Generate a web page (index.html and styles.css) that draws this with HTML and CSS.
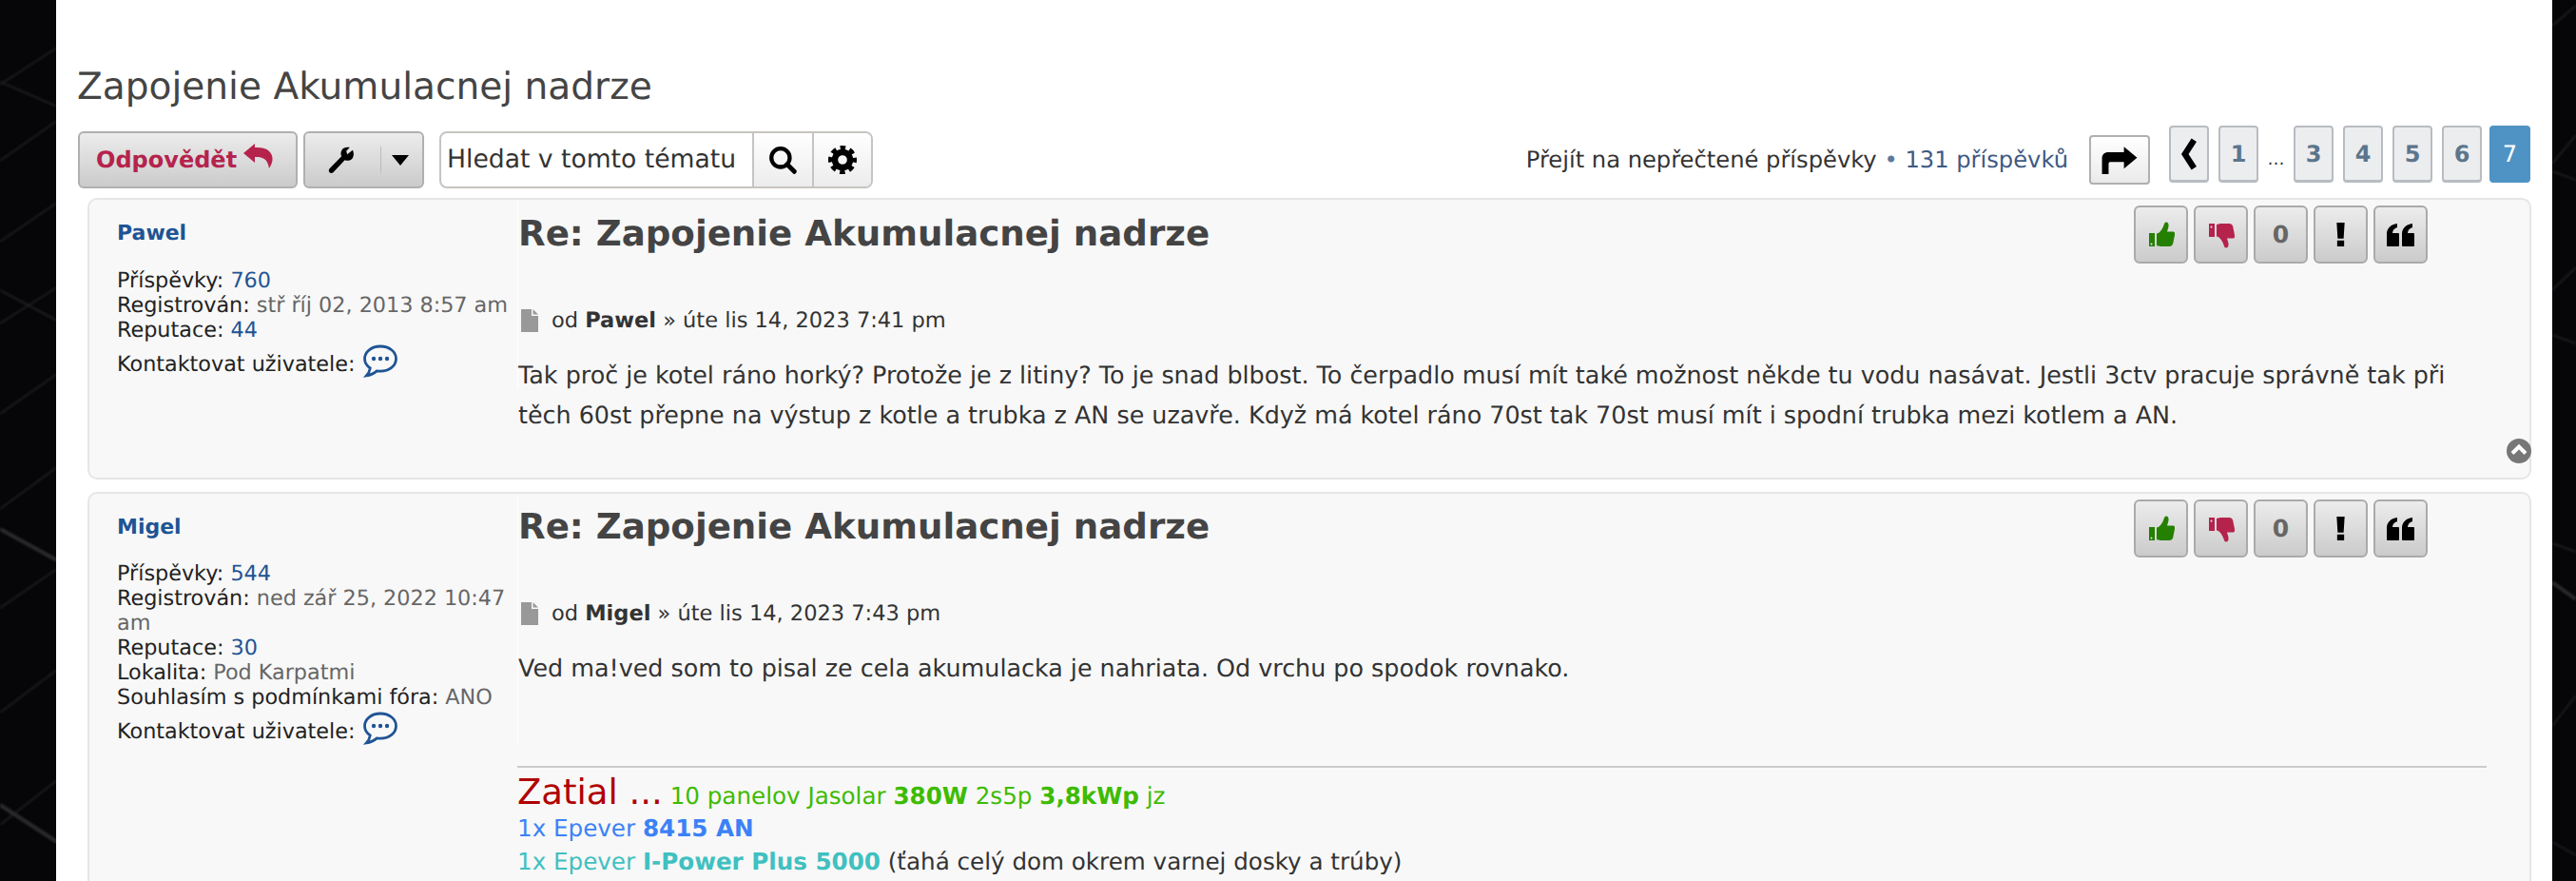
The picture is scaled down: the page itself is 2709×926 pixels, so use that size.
FILE: index.html
```html
<!DOCTYPE html>
<html lang="cs">
<head>
<meta charset="utf-8">
<title>Zapojenie Akumulacnej nadrze</title>
<link rel="stylesheet" href="styles.css">
</head>
<body>
<svg class="bg-lines" viewBox="0 0 2709 926" aria-hidden="true">
  <path class="line" d="M0 89 60 50M0 169 60 127M0 254 60 213M0 340 60 302M0 435 60 393M0 535 60 491M0 639 60 598M0 749 60 704M0 867 60 820M0 86 60 112M0 305 60 337"/>
  <path class="line" d="M2684 305 2709 281M2684 172 2709 142M2684 27 2709 6M2684 763 2709 731M2684 180 2709 189M2684 352 2709 361M2684 571 2709 580M2684 885 2709 899"/>
  <path class="line line-bright" d="M0 556 60 589M0 846 60 885M2684 612 2709 630"/>
</svg>
<svg class="icon-defs" width="0" height="0" aria-hidden="true">
  <defs>
    <symbol id="i-up" viewBox="0 0 28 28"><path d="M1 12h6v14H1zM3.500 22.500a1 1 0 1 0 .01 0z" fill-rule="evenodd"/><path d="M9 12.500c3 0 6-5 7-7.500 1-3 1.500-4.500 3-4.500 2.500 0 3 3 2.200 6l-1.200 4h6c2 0 2.500 2 2 3.500l-1.800 9c-.5 2-2 3-4 3h-9c-2 0-2.500-1-4.200-1z"/></symbol>
    <symbol id="i-down" viewBox="0 0 28 28"><path d="M1 2h6v14H1zM3.500 4.500a1 1 0 1 0 .01 0z" fill-rule="evenodd"/><path d="M9 15.500c3 0 6 5 7 7.500 1 3 1.500 4.500 3 4.500 2.500 0 3-3 2.200-6l-1.200-4h6c2 0 2.500-2 2-3.500l-1.800-9c-.5-2-2-3-4-3h-9c-2 0-2.500 1-4.200 1z"/></symbol>
    <symbol id="i-doc" viewBox="0 0 18 24"><path d="M0 0h11v7h7v17H0zM12.500 0 18 5.500h-5.500z"/></symbol>
    <symbol id="i-chat" viewBox="0 0 36 36"><path d="M18 2C8.600 2 1.500 7.800 1.500 15c0 4 2.200 7.500 5.800 9.900-.4 2.700-1.600 5.400-4 8 4.300-.6 8.200-2.500 11-5 1.200.2 2.400.3 3.700.3 9.400 0 16.500-5.800 16.500-13.200S27.400 2 18 2z" fill="none" stroke="currentColor" stroke-width="2.800"/><circle cx="11" cy="15" r="2.200"/><circle cx="18" cy="15" r="2.200"/><circle cx="25" cy="15" r="2.200"/></symbol>
    <symbol id="i-quote" viewBox="0 0 29 24"><path d="M1 24a1 1 0 0 1-1-1V11C0 5 4 1 11 0v4C8 5 6 7 6 10h6a1 1 0 0 1 1 1v12a1 1 0 0 1-1 1zM17 24a1 1 0 0 1-1-1V11c0-6 4-10 11-11v4c-3 1-5 3-5 6h6a1 1 0 0 1 1 1v12a1 1 0 0 1-1 1z"/></symbol>
    <symbol id="i-bang" viewBox="0 0 8 24"><path d="M0 0h8L7 16H1zM.5 18h7v6h-7z"/></symbol>
  </defs>
</svg>
<div class="wrap">
  <h2 class="topic-title">Zapojenie Akumulacnej nadrze</h2>
  <div class="action-bar">
    <a class="btn btn-reply">Odpovědět
      <svg class="reply-icon" viewBox="0 0 34 28"><path d="M13 1 1 11l12 10v-6c8 0 13 1 15 12 4-6 5-12 1-17-3-4-8-5-16-5z"/></svg>
    </a>
    <a class="btn btn-tools">
      <svg class="wrench" viewBox="0 0 28 28"><path d="M25 3.500 19.500 8l-1-3.500L22 1c-3-.8-6.500 0-8 2.500-1.400 2.300-1.200 4.600-.3 6.500L1.500 22.500c-1 1-1 2.700 0 3.700s2.700 1 3.700 0L17 13.700c2.200.9 5 .8 7-1 2.200-2 2.500-6.200 1-9.200z"/></svg>
      <span class="tools-sep"></span>
      <span class="caret"></span>
    </a>
    <div class="search-box">
      <span class="search-input">Hledat v tomto tématu</span>
      <span class="search-btn">
        <svg class="search-icon" viewBox="0 0 28 28"><circle cx="12" cy="12" r="9" fill="none" stroke="#000" stroke-width="4"/><path d="m18.500 18.500 7 7" stroke="#000" stroke-width="4.500" stroke-linecap="round"/></svg>
      </span>
      <span class="search-btn">
        <svg class="gear-icon" viewBox="-14 -14 28 28"><circle r="7.500" fill="none" stroke="#000" stroke-width="6"/><circle r="11.500" fill="none" stroke="#000" stroke-width="5" stroke-dasharray="5 4.030" stroke-dashoffset="2.500"/></svg>
      </span>
    </div>
    <div class="pagination">
      <span class="pag-text">Přejít na nepřečtené příspěvky <b class="bull">•</b> <span class="pag-count">131 příspěvků</span></span>
      <a class="jump">
        <svg class="jump-icon" viewBox="0 0 34 26"><path d="M21 1 33 11 21 21v-6H9c-1.500 0-2 .5-2 2v9H1V12c0-4 2-6 6-6h14z"/></svg>
      </a>
      <ul class="pages">
        <li class="page prev"><svg class="prev-icon" viewBox="0 0 18 34"><path d="M14 3 5 17l9 14" fill="none" stroke="#000" stroke-width="6"/></svg></li>
        <li class="page">1</li>
        <li class="ellipsis">…</li>
        <li class="page">3</li>
        <li class="page">4</li>
        <li class="page">5</li>
        <li class="page">6</li>
        <li class="page active">7</li>
      </ul>
    </div>
  </div>

  <article class="post post-first">
    <aside class="profile">
      <a class="author">Pawel</a>
      <dl class="meta">
        <div>Příspěvky: <a>760</a></div>
        <div>Registrován: <span class="muted">stř říj 02, 2013 8:57 am</span></div>
        <div>Reputace: <a>44</a></div>
      </dl>
      <div class="contact">Kontaktovat uživatele: <svg class="chat"><use href="#i-chat"/></svg></div>
    </aside>
    <div class="postbody">
      <div class="post-head">
        <h3 class="post-title">Re: Zapojenie Akumulacnej nadrze</h3>
        <div class="post-buttons">
          <a class="pbtn up"><svg><use href="#i-up"/></svg></a>
          <a class="pbtn down"><svg><use href="#i-down"/></svg></a>
          <a class="pbtn score">0</a>
          <a class="pbtn bang"><svg class="bang-icon"><use href="#i-bang"/></svg></a>
          <a class="pbtn quote"><svg class="quote-icon"><use href="#i-quote"/></svg></a>
        </div>
      </div>
      <p class="author-line"><svg class="doc"><use href="#i-doc"/></svg><span>od <b>Pawel</b> » úte lis 14, 2023 7:41 pm</span></p>
      <div class="content">Tak proč je kotel ráno horký? Protože je z litiny? To je snad blbost. To čerpadlo musí mít také možnost někde tu vodu nasávat. Jestli 3ctv pracuje správně tak při těch 60st přepne na výstup z kotle a trubka z AN se uzavře. Když má kotel ráno 70st tak 70st musí mít i spodní trubka mezi kotlem a AN.</div>
    </div>
    <a class="top-link"><svg viewBox="0 0 26 26"><circle cx="13" cy="13" r="13" fill="#777"/><path d="m6 15.500 7-7 7 7" fill="none" stroke="#fff" stroke-width="4"/></svg></a>
  </article>

  <article class="post post-second">
    <aside class="profile">
      <a class="author">Migel</a>
      <dl class="meta">
        <div>Příspěvky: <a>544</a></div>
        <div>Registrován: <span class="muted">ned zář 25, 2022 10:47 am</span></div>
        <div>Reputace: <a>30</a></div>
        <div>Lokalita: <span class="muted">Pod Karpatmi</span></div>
        <div>Souhlasím s podmínkami fóra: <span class="muted">ANO</span></div>
      </dl>
      <div class="contact">Kontaktovat uživatele: <svg class="chat"><use href="#i-chat"/></svg></div>
    </aside>
    <div class="postbody">
      <div class="post-head">
        <h3 class="post-title">Re: Zapojenie Akumulacnej nadrze</h3>
        <div class="post-buttons">
          <a class="pbtn up"><svg><use href="#i-up"/></svg></a>
          <a class="pbtn down"><svg><use href="#i-down"/></svg></a>
          <a class="pbtn score">0</a>
          <a class="pbtn bang"><svg class="bang-icon"><use href="#i-bang"/></svg></a>
          <a class="pbtn quote"><svg class="quote-icon"><use href="#i-quote"/></svg></a>
        </div>
      </div>
      <p class="author-line"><svg class="doc"><use href="#i-doc"/></svg><span>od <b>Migel</b> » úte lis 14, 2023 7:43 pm</span></p>
      <div class="content">Ved ma!ved som to pisal ze cela akumulacka je nahriata. Od vrchu po spodok rovnako.</div>
    </div>
    <div class="signature">
      <div class="sig-line sig-first"><span class="sig-big">Zatial ...</span> <span class="green">10 panelov Jasolar <b>380W</b> 2s5p <b>3,8kWp</b> jz</span></div>
      <div class="sig-line blue">1x Epever <b>8415 AN</b></div>
      <div class="sig-line"><span class="teal">1x Epever <b>I-Power Plus 5000</b></span> (ťahá celý dom okrem varnej dosky a trúby)</div>
    </div>
  </article>
</div>
</body>
</html>
```
FILE: styles.css
```css
* { box-sizing: border-box; }
body {
  margin: 0;
  height: 926px;
  overflow: hidden;
  background-color: #060608;
  font-family: "DejaVu Sans", Verdana, sans-serif;
  color: #333;
  text-rendering: geometricPrecision;
}
.bg-lines {
  position: fixed;
  left: 0;
  top: 0;
  width: 2709px;
  height: 926px;
  z-index: -1;
  filter: blur(1px);
}
.line { fill: none; stroke: #1e1e21; stroke-width: 2; }
.line-bright { stroke: #2b2b2e; stroke-width: 4; }
.icon-defs { display: block; height: 0; }
.wrap {
  margin-left: 59px;
  width: 2625px;
  height: 926px;
  overflow: hidden;
  background: #fff;
  padding: 70px 22px 0;
}
.topic-title {
  margin: 0;
  height: 44px;
  font-weight: normal;
  font-size: 39.1px;
  line-height: 44px;
  color: #444;
  white-space: nowrap;
}
.action-bar {
  display: flex;
  align-items: flex-start;
  margin: 24px 0 10px 1px;
  height: 60px;
}
.btn {
  display: flex;
  align-items: center;
  height: 60px;
  border: 2px solid #b0b0b0;
  border-radius: 6px;
  background: linear-gradient(#ececec, #cbcbcb);
}
.btn-reply {
  width: 231px;
  padding-left: 17px;
  gap: 6px;
  font-size: 24px;
  font-weight: bold;
  color: #b5234d;
}
.reply-icon { width: 34px; height: 28px; fill: #b5234d; margin-bottom: 8px; }
.btn-tools {
  width: 127px;
  margin-left: 6px;
  padding-left: 24px;
}
.wrench { width: 29px; height: 29px; fill: #000; }
.tools-sep { width: 1px; height: 28px; background: #bbb; margin: 0 0 0 26px; }
.caret {
  margin-left: 11px;
  border-left: 9px solid transparent;
  border-right: 9px solid transparent;
  border-top: 11px solid #000;
}
.search-box {
  display: flex;
  width: 456px;
  height: 60px;
  margin-left: 16px;
  border: 2px solid #c7c4c0;
  border-radius: 8px;
  background: #fff;
}
.search-input {
  width: 327px;
  padding-left: 6px;
  line-height: 56px;
  font-size: 26.6px;
  color: #333;
  white-space: nowrap;
}
.search-btn {
  flex: 1;
  display: flex;
  align-items: center;
  justify-content: center;
  border-left: 2px solid #c7c4c0;
  background: linear-gradient(#fff, #ececec);
}
.search-btn:last-child { border-radius: 0 6px 6px 0; }
.search-icon { width: 30px; height: 30px; }
.gear-icon { width: 30px; height: 30px; }
.pagination {
  display: flex;
  align-items: center;
  margin-left: auto;
  margin-right: 1px;
  height: 60px;
}
.pag-text { font-size: 24.2px; color: #333; white-space: nowrap; }
.bull { color: #5b7a9d; font-weight: normal; }
.pag-count { color: #3e5a84; }
.jump {
  display: flex;
  align-items: center;
  justify-content: center;
  width: 64px;
  height: 52px;
  margin-left: 22px;
  border: 2px solid #b0b0b0;
  border-radius: 4px;
  background: linear-gradient(#fff, #eaeaea);
}
.jump-icon { width: 40px; height: 30px; fill: #000; }
.pages {
  display: flex;
  align-items: flex-start;
  gap: 10px;
  list-style: none;
  margin: 0 0 0 20px;
  padding: 0;
}
.page {
  display: flex;
  align-items: center;
  justify-content: center;
  width: 42px;
  height: 60px;
  border: 2px solid #b8bcc2;
  border-bottom-width: 3px;
  border-radius: 4px;
  background: #ecedee;
  color: #5c758c;
  font-size: 24px;
  font-weight: bold;
}
.prev-icon { width: 20px; height: 36px; }
.page.active { width: 43px; margin-left: -2px; background: #4f93c4; border-color: #4f93c4; color: #fff; font-weight: normal; }
.ellipsis { width: 27px; margin: 0 -5px; text-align: center; line-height: 72px; font-size: 18px; color: #333; }
.post {
  position: relative;
  margin: 0 0 13px 11px;
  width: 2570px;
  border: 2px solid #e6e6e6;
  border-radius: 10px;
  background: #f8f8f8;
}
.post-first { height: 296px; display: grid; grid-template-columns: 450px 1fr; }
.post-second { height: 600px; display: grid; grid-template-columns: 450px 1fr; grid-template-rows: 286px auto; }
.profile { padding: 22px 0 0 29px; font-size: 22.3px; line-height: 26px; color: #333; }
.author { display: block; font-weight: bold; font-size: 22px; line-height: 28px; color: #1f5494; }
.meta { margin: 22px 0 0; color: #222; }
.post-second .meta { margin-top: 21px; }
.meta a { color: #1f5494; }
.muted { color: #666; }
.contact { display: flex; align-items: center; gap: 9px; margin-top: 2px; color: #222; }
.chat { width: 36px; height: 36px; fill: #1f5494; color: #1f5494; margin-bottom: 6px; }
.postbody {
  border-left: 1px solid #fff;
  padding-top: 6px;
  padding-right: 45px;
  height: 197px;
}
.post-second .postbody { height: 262px; }
.post-head { display: flex; justify-content: space-between; height: 61px; }
.post-title {
  margin: 6px 0 0;
  font-size: 37.2px;
  line-height: 46px;
  color: #444;
  font-weight: bold;
}
.post-second .post-title { margin-top: 5px; }
.post-buttons { display: flex; gap: 6px; margin-right: 62px; }
.pbtn {
  display: flex;
  align-items: center;
  justify-content: center;
  width: 57px;
  height: 61px;
  border: 2px solid #aaa;
  border-radius: 6px;
  background: linear-gradient(#ececec, #cbcbcb);
  font-weight: bold;
}
.pbtn svg { width: 28px; height: 28px; }
.up { fill: #248000; }
.down { fill: #b5234d; }
.score { color: #666; font-size: 25px; }
.pbtn .bang-icon { width: 9px; height: 25px; fill: #000; }
.pbtn .quote-icon { width: 29px; height: 24px; fill: #000; }
.author-line { display: flex; align-items: center; gap: 14px; margin: 46px 0 0 3px; font-size: 22.5px; line-height: 28px; color: #333; }
.post-second .author-line { margin-top: 45px; }
.doc { width: 18px; height: 24px; fill: #999; }
.content { margin: 22px 0 0; font-size: 25.4px; line-height: 42px; color: #333; }
.top-link { position: absolute; right: -2px; bottom: 15px; width: 26px; height: 26px; }
.top-link svg { display: block; width: 26px; height: 26px; }
.signature {
  grid-column: 2;
  margin: 0 45px 0 0;
  border-top: 2px solid #ccc;
  padding-top: 9px;
  font-size: 24.6px;
  line-height: 35px;
}
.sig-big { font-size: 37px; color: #b00000; }
.sig-first { line-height: 33px; }
.green { color: #3dbb00; }
.blue { color: #3b82f6; }
.teal { color: #40c0c0; }
```
